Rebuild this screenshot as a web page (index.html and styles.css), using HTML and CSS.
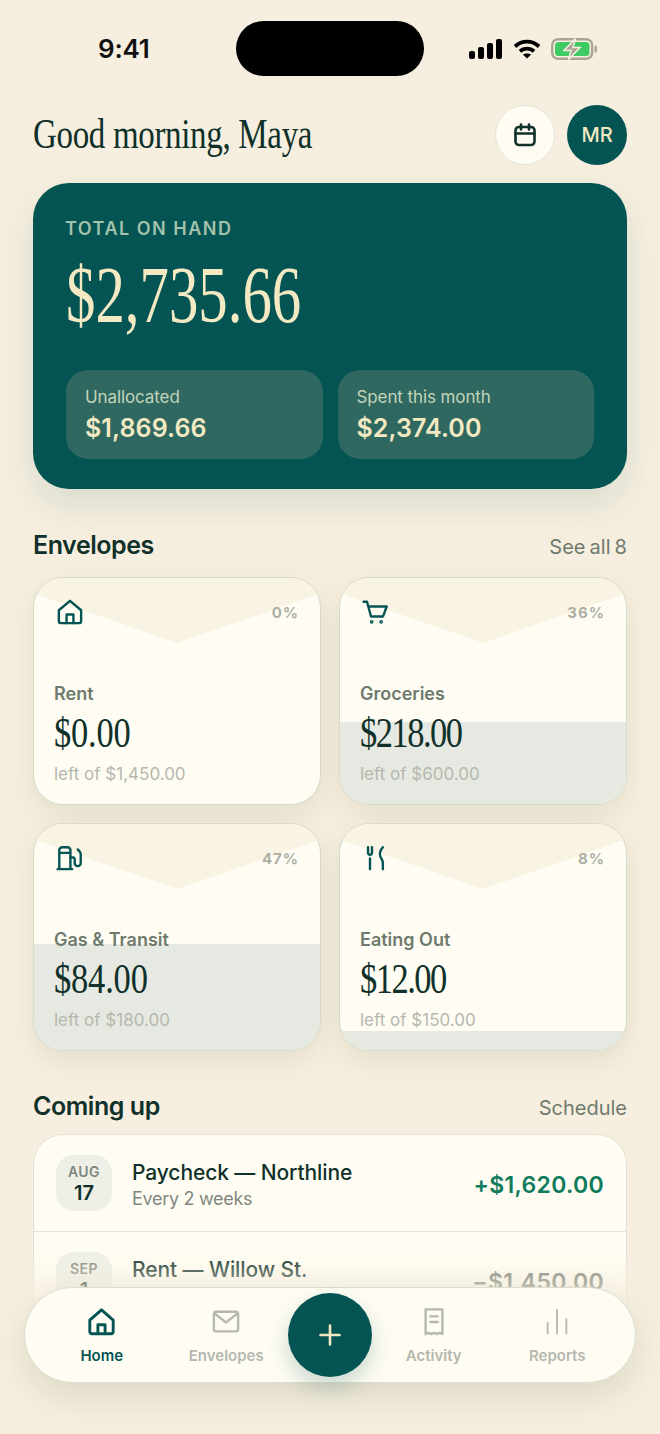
FILE: index.html
```html
<!DOCTYPE html>
<html lang="en">
<head>
<meta charset="utf-8">
<title>Envelopes</title>
<link rel="stylesheet" href="styles.css">
</head>
<body>
<div class="phone">
  <div class="status">
    <span class="time">9:41</span>
    <span class="island"></span>
    <span class="status-icons">
      <svg width="34" height="22" viewBox="0 0 34 22"><rect x="0" y="13" width="6" height="8" rx="2"/><rect x="9" y="9" width="6" height="12" rx="2"/><rect x="18" y="5" width="6" height="16" rx="2"/><rect x="27" y="1" width="6" height="20" rx="2"/></svg>
      <svg width="28" height="22" viewBox="0 0 28 22"><path d="M2 8.5C9 2 19 2 26 8.5" class="wifi"/><path d="M7 13.3C11 9.7 17 9.7 21 13.3" class="wifi"/><path d="M14 20.5L9.8 16.6C12 15 16 15 18.2 16.6Z"/></svg>
      <svg width="48" height="22" viewBox="0 0 48 22"><rect x="1.2" y="1.2" width="40" height="19.6" rx="6" class="bat-body"/><rect x="4" y="4" width="34.5" height="14" rx="3.5" class="bat-fill"/><rect x="43.6" y="7.5" width="2.4" height="7" rx="1.2" class="bat-tip"/><path d="M24.5 0.5L13 12.5H20L17.5 21.5L29 9.5H22Z" class="bat-bolt"/></svg>
    </span>
  </div>

  <header class="top">
    <h1 class="greeting"><span class="squeeze">Good morning, Maya</span></h1>
    <div class="top-actions">
      <span class="round-btn">
        <svg width="24" height="24" viewBox="0 0 24 24" class="ic dark"><rect x="2.5" y="4" width="19" height="18" rx="3.5"/><path d="M2.5 10.5H21.5M8 1.5V6.5M16 1.5V6.5"/></svg>
      </span>
      <span class="avatar">MR</span>
    </div>
  </header>

  <section class="hero">
    <div class="hero-label">TOTAL ON HAND</div>
    <div class="hero-total"><span class="squeeze">$2,735.66</span></div>
    <div class="hero-stats">
      <div class="stat"><div class="stat-label">Unallocated</div><div class="stat-value">$1,869.66</div></div>
      <div class="stat"><div class="stat-label">Spent this month</div><div class="stat-value">$2,374.00</div></div>
    </div>
  </section>

  <div class="section-head envelopes-head"><h2>Envelopes</h2><span class="see-all">See all 8</span></div>
  <section class="cards">
    <article class="card">
      <div class="flap"></div>
      <div class="card-top">
        <svg width="24" height="24" viewBox="0 0 28 28" class="ic teal card-ic"><path d="M1 12L14 1L27 12V24.500A2.500 2.500 0 0 1 24.500 27H3.500A2.500 2.500 0 0 1 1 24.500Z"/><path d="M10 27V17H18V27"/></svg>
        <span class="pct">0%</span>
      </div>
      <div class="card-name">Rent</div>
      <div class="card-amt"><span class="squeeze">$0.00</span></div>
      <div class="card-left">left of $1,450.00</div>
    </article>
    <article class="card">
      <div class="fill" style="height:36.4%"></div>
      <div class="flap"></div>
      <div class="card-top">
        <svg width="24" height="24" viewBox="0 0 28 28" class="ic teal card-ic"><path d="M-0.500 2H3.500L8.200 19.200H22.200L26.500 7.600H5"/><circle cx="9" cy="25.500" r="0.800"/><circle cx="20" cy="25.500" r="0.800"/></svg>
        <span class="pct">36%</span>
      </div>
      <div class="card-name">Groceries</div>
      <div class="card-amt"><span class="squeeze tight">$218.00</span></div>
      <div class="card-left">left of $600.00</div>
    </article>
    <article class="card">
      <div class="fill" style="height:47%"></div>
      <div class="flap"></div>
      <div class="card-top">
        <svg width="24" height="24" viewBox="0 0 28 28" class="ic teal card-ic"><path d="M-0.500 27H16.500M1.500 27V5A3.500 3.500 0 0 1 5 1.500H11A3.500 3.500 0 0 1 14.500 5V27M1.500 8H14.500"/><path d="M14.500 13.500H17.500A1.800 1.800 0 0 1 19.500 15.500V20A3.500 3.500 0 0 0 26.500 20V9.500C26.500 7.500 24.500 5.500 23 4"/></svg>
        <span class="pct">47%</span>
      </div>
      <div class="card-name">Gas &amp; Transit</div>
      <div class="card-amt"><span class="squeeze">$84.00</span></div>
      <div class="card-left">left of $180.00</div>
    </article>
    <article class="card">
      <div class="fill" style="height:8.3%"></div>
      <div class="flap"></div>
      <div class="card-top">
        <svg width="24" height="24" viewBox="0 0 28 28" class="ic teal card-ic"><path d="M4.700 1.500V8C4.700 11 9.300 11 9.300 8V1.500M7 14.500V27"/><path d="M22 1.500C19 5 18 9 19 12C20 15 22 16 22 20V27"/></svg>
        <span class="pct">8%</span>
      </div>
      <div class="card-name">Eating Out</div>
      <div class="card-amt"><span class="squeeze tight">$12.00</span></div>
      <div class="card-left">left of $150.00</div>
    </article>
  </section>

  <div class="section-head coming-head"><h2>Coming up</h2><span class="see-all">Schedule</span></div>
  <section class="list">
    <div class="row">
      <div class="date"><span class="mon">AUG</span><span class="day">17</span></div>
      <div class="row-main"><div class="row-title">Paycheck — Northline</div><div class="row-sub">Every 2 weeks</div></div>
      <div class="row-amt plus">+$1,620.00</div>
    </div>
    <div class="row">
      <div class="date"><span class="mon">SEP</span><span class="day">1</span></div>
      <div class="row-main"><div class="row-title">Rent — Willow St.</div><div class="row-sub">Monthly</div></div>
      <div class="row-amt">−$1,450.00</div>
    </div>
  </section>

  <div class="fade"></div>
  <nav class="tabbar">
    <a class="tab active">
      <svg width="27" height="28" viewBox="0 0 30 30" class="ic teal thick"><path d="M2 13L15 1.500L28 13V25.500A2.500 2.500 0 0 1 25.500 28H4.500A2.500 2.500 0 0 1 2 25.500Z"/><path d="M11 28V18H19V28"/></svg>
      <span>Home</span>
    </a>
    <a class="tab">
      <svg width="28" height="28" viewBox="0 0 30 30" class="ic grey"><rect x="2" y="4" width="26" height="21" rx="2.500"/><path d="M3 6L15 15.500L27 6"/></svg>
      <span>Envelopes</span>
    </a>
    <span class="fab">
      <svg width="26" height="26" viewBox="0 0 26 26" class="ic cream"><path d="M13 3.500V22.500M3.500 13H22.500"/></svg>
    </span>
    <a class="tab">
      <svg width="28" height="28" viewBox="0 0 30 30" class="ic grey"><path d="M6 1.500H24V28L21 26.500L18 28L15 26.500L12 28L9 26.500L6 28Z"/><path d="M11 9H19M11 15H19"/></svg>
      <span>Activity</span>
    </a>
    <a class="tab">
      <svg width="28" height="28" viewBox="0 0 30 30" class="ic grey thin"><path d="M5 16V27M15 2V27M25 12V27"/></svg>
      <span>Reports</span>
    </a>
  </nav>
</div>
</body>
</html>
```
FILE: styles.css
```css
* { box-sizing: border-box; margin: 0; padding: 0; }
html, body { background: #f6efdf; }
body { font-family: "Inter", "Noto Sans", sans-serif; color: #10302a; }
.phone { position: relative; width: 660px; height: 1434px; overflow: hidden; padding: 0 33px; background: #f6efdf; }

.squeeze { display: inline-block; font-family: "Liberation Serif", serif; font-weight: 400; transform-origin: left center; white-space: nowrap; }

.status { display: grid; grid-template-columns: 203px 188px 1fr; align-items: center; height: 84px; padding-top: 21px; padding-bottom: 8px; }
.time { font-size: 26px; font-weight: 600; color: #111; padding-left: 65px; letter-spacing: -0.2px; }
.island { width: 188px; height: 55px; border-radius: 28px; background: #000; }
.status-icons { display: flex; align-items: center; gap: 10px; padding-left: 45px; }
.status-icons svg { fill: #000; flex: none; }
.wifi { fill: none; stroke: #000; stroke-width: 3.8; }
.bat-body { fill: none; stroke: #aba594; stroke-width: 2.400; }
.bat-fill { fill: #3ecb63; }
.bat-tip { fill: #aba594; }
.bat-bolt { fill: #aba594; stroke: #f6efdf; stroke-width: 1.500; }

.top { display: flex; justify-content: space-between; align-items: center; height: 60px; margin-top: 21px; }
.greeting { font-size: 42px; line-height: 56px; height: 60px; color: #10302a; font-weight: 400; }
.greeting .squeeze { transform: scaleX(.785); letter-spacing: -0.4px; }
.top-actions { display: flex; gap: 12px; }
.round-btn, .avatar { width: 60px; height: 60px; border-radius: 50%; display: flex; align-items: center; justify-content: center; }
.round-btn { background: #fffdf3; border: 1.500px solid #e5e6d8; }
.avatar { background: #045453; color: #f3e9c2; font-size: 20px; font-weight: 500; }

.ic { fill: none; stroke-linecap: round; stroke-linejoin: round; stroke-width: 2.200; overflow: visible; flex: none; }
.ic.dark { stroke: #10302a; stroke-width: 2.600; }
.ic.teal { stroke: #045453; }
.ic.card-ic { stroke-width: 2.800; margin-left: 3.500px; }
.ic.thick { stroke-width: 3.200; }
.ic.grey { stroke: #b5b8ae; stroke-width: 2.500; }
.ic.thin { stroke-width: 2; }
.ic.cream { stroke: #f3e9c2; stroke-width: 2.600; }

.hero { height: 306px; margin-top: 18px; padding: 34px 33px 0; border-radius: 36px; background: #045453; box-shadow: 0 16px 38px rgba(4, 84, 83, .12); }
.hero-label { margin-left: -1px; font-size: 18px; line-height: 24px; font-weight: 600; letter-spacing: 1.500px; color: #a3c2ab; }
.hero-total { font-size: 80px; line-height: 90px; color: #f3e9c2; margin-top: 7px; }
.hero-total .squeeze { transform: scaleX(.735); }
.hero-stats { display: grid; grid-template-columns: 1fr 1fr; gap: 15px; margin-top: 30px; }
.stat { height: 89px; padding: 16px 19px 0; border-radius: 22px; background: #2f6860; }
.stat-label { font-size: 17px; line-height: 22px; color: #c3d4b9; letter-spacing: -0.1px; }
.stat-value { margin-top: 2px; font-size: 25px; line-height: 36px; font-weight: 600; color: #f3e9c2; letter-spacing: .1px; }

.section-head { display: flex; justify-content: space-between; align-items: center; height: 34px; }
.section-head h2 { font-size: 25px; font-weight: 600; color: #10302a; letter-spacing: -0.45px; }
.see-all { padding-top: 3px; font-size: 20px; color: #6f7a6e; word-spacing: -1.500px; }
.envelopes-head { margin-top: 39px; }
.coming-head { margin-top: 38px; }

.cards { display: grid; grid-template-columns: 288px 288px; grid-auto-rows: 228px; gap: 18px; margin-top: 15px; }
.card { position: relative; overflow: hidden; padding: 0 21px 0 20px; border-radius: 30px; background: #fffdf3; border: 1.500px solid #d6dac9; box-shadow: 0 10px 28px rgba(80, 80, 40, .10); }
.flap { position: absolute; inset: 0 0 auto 0; height: 65px; background: #f9f3e3; clip-path: polygon(0 0, 100% 0, 100% 24%, 50% 100%, 0 24%); }
.fill { position: absolute; left: 0; right: 0; bottom: 0; background: #e6e9e1; }
.card-top, .card-name, .card-amt, .card-left { position: relative; }
.card-top { display: flex; justify-content: space-between; align-items: center; height: 28px; margin-top: 20px; }
.pct { font-size: 15px; font-weight: 700; color: #adafa5; letter-spacing: 1px; }
.card-name { margin-top: 56px; font-size: 18px; line-height: 24px; font-weight: 600; color: #6f7a6e; }
.card-amt { font-size: 42px; line-height: 48px; color: #10302a; margin-top: 2px; }
.card-amt .squeeze { transform: scaleX(.82); letter-spacing: -0.2px; }
.card-amt .squeeze.tight { letter-spacing: -1.800px; }
.card-left { font-size: 17px; line-height: 22px; color: #b5b8ae; margin-top: 6px; }

.list { margin-top: 11px; border-radius: 30px 30px 0 0; background: #fffdf3; border: 1.500px solid #e1e2d3; }
.row { display: flex; align-items: center; height: 97px; padding: 0 22px; border-bottom: 1.500px solid #e3e5d8; }
.date { display: flex; flex-direction: column; align-items: center; justify-content: center; width: 56px; height: 56px; padding-top: 3px; border-radius: 18px; background: #eef0e8; }
.mon { font-size: 14px; line-height: 16px; font-weight: 600; color: #7f877e; letter-spacing: .5px; }
.day { font-size: 20px; line-height: 26px; font-weight: 600; color: #10302a; }
.row-main { flex: 1; margin-left: 20px; padding-top: 5px; }
.row-title { font-size: 21px; line-height: 27px; font-weight: 500; color: #10302a; letter-spacing: -0.1px; }
.row-sub { font-size: 18px; line-height: 26px; color: #7f877e; letter-spacing: -0.3px; }
.row-amt { font-size: 23px; font-weight: 600; color: #6d766c; letter-spacing: .3px; padding-top: 4px; }
.row-amt.plus { color: #107a5c; }

.fade { position: absolute; left: 0; right: 0; bottom: 0; height: 184px; background: linear-gradient(to bottom, rgba(246, 239, 223, 0), #f6efdf 34%); }
.tabbar { position: absolute; left: 24px; top: 1287px; width: 612px; height: 96px; display: grid; grid-template-columns: 1fr 1fr 84px 1fr 1fr; align-items: center; padding: 0 16px; border-radius: 48px; background: #fffdf3; border: 1.500px solid #dcdecf; box-shadow: 0 14px 34px rgba(80, 80, 40, .14); }
.tab { display: flex; flex-direction: column; align-items: center; gap: 10px; padding-top: 3px; font-size: 15px; line-height: 20px; font-weight: 600; color: #b5b8ae; }
.tab.active { color: #045453; margin-left: -2px; }
.fab { width: 84px; height: 84px; border-radius: 50%; background: #045453; display: flex; align-items: center; justify-content: center; box-shadow: 0 10px 22px rgba(4, 84, 83, .22); }
```
